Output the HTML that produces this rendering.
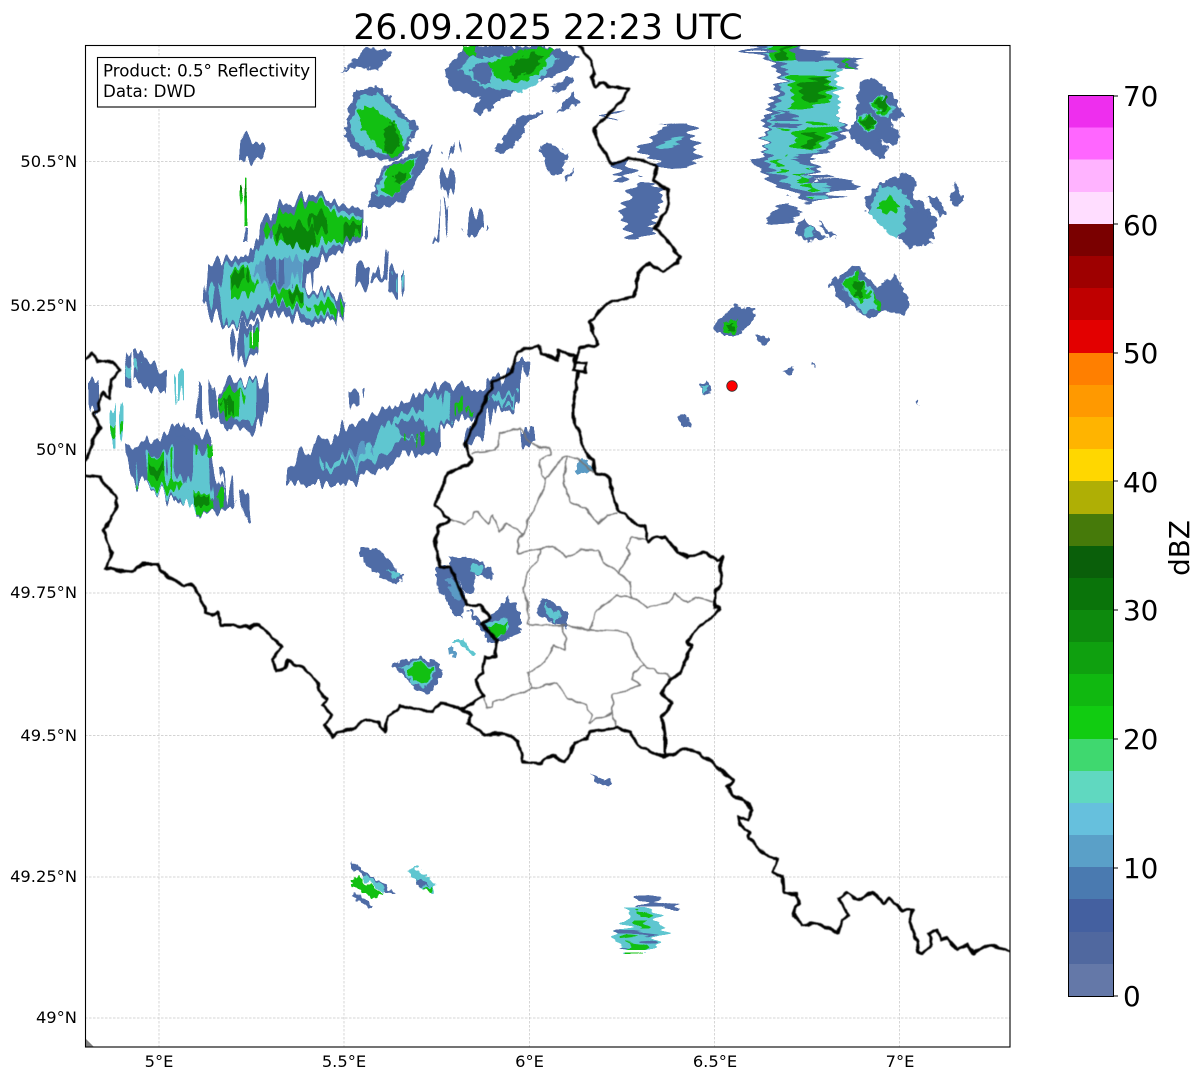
<!DOCTYPE html>
<html><head><meta charset="utf-8"><title>Radar</title>
<style>
html,body{margin:0;padding:0;background:#fff;width:1202px;height:1081px;overflow:hidden}
svg{display:block}
text{font-family:"DejaVu Sans",sans-serif;fill:#000}
.b{fill:#4f6ca6;stroke:#4f6ca6;stroke-width:1}
.t{fill:#5a9ac4;stroke:#5a9ac4;stroke-width:1}
.c{fill:#5fc6d0;stroke:#5fc6d0;stroke-width:1}
.g{fill:#12c012;stroke:#12c012;stroke-width:1}
.d{fill:#0a860a;stroke:#0a860a;stroke-width:1}
.ln{fill:none;stroke:#000;stroke-width:3;stroke-linejoin:round;stroke-linecap:round}
.gr{fill:none;stroke:#777;stroke-width:1.500;stroke-linejoin:round}
.grid{stroke:#c6c6c6;stroke-width:.7;stroke-dasharray:2.5 1.5}
</style></head><body>
<svg width="1202" height="1081" viewBox="0 0 1202 1081" xmlns="http://www.w3.org/2000/svg">
<defs>
<filter id="j" x="0" y="0" width="1202" height="1081" filterUnits="userSpaceOnUse" color-interpolation-filters="sRGB">
<feTurbulence type="fractalNoise" baseFrequency="0.16" numOctaves="2" seed="4"/>
<feDisplacementMap in="SourceGraphic" scale="9" xChannelSelector="R" yChannelSelector="G"/>
<feGaussianBlur stdDeviation=".35"/>
</filter>
<filter id="v" x="0" y="0" width="1202" height="1081" filterUnits="userSpaceOnUse" color-interpolation-filters="sRGB">
<feTurbulence type="fractalNoise" baseFrequency="0.2 0.012" numOctaves="1" seed="7"/>
<feDisplacementMap in="SourceGraphic" scale="30" xChannelSelector="R" yChannelSelector="G"/>
<feGaussianBlur stdDeviation=".35"/>
</filter>
<filter id="h" x="0" y="0" width="1202" height="1081" filterUnits="userSpaceOnUse" color-interpolation-filters="sRGB">
<feTurbulence type="fractalNoise" baseFrequency="0.012 0.22" numOctaves="1" seed="11"/>
<feDisplacementMap in="SourceGraphic" scale="28" xChannelSelector="R" yChannelSelector="G"/>
<feGaussianBlur stdDeviation=".35"/>
</filter>
<filter id="w" x="0" y="0" width="1202" height="1081" filterUnits="userSpaceOnUse" color-interpolation-filters="sRGB">
<feTurbulence type="fractalNoise" baseFrequency="0.14" numOctaves="1" seed="2"/>
<feDisplacementMap in="SourceGraphic" scale="5" xChannelSelector="R" yChannelSelector="G"/>
<feGaussianBlur stdDeviation=".45"/>
</filter>
<clipPath id="ax"><rect x="85" y="45" width="925" height="1002"/></clipPath>
</defs>
<rect width="1202" height="1081" fill="#fff"/>
<text x="548" y="39" font-size="34.7" text-anchor="middle">26.09.2025 22:23 UTC</text>

<g class="grid">
<line x1="159" y1="45" x2="159" y2="1047"/><line x1="344" y1="45" x2="344" y2="1047"/><line x1="529.500" y1="45" x2="529.500" y2="1047"/><line x1="714.500" y1="45" x2="714.500" y2="1047"/><line x1="899.500" y1="45" x2="899.500" y2="1047"/>
<line x1="85" y1="161.500" x2="1010" y2="161.500"/><line x1="85" y1="305.500" x2="1010" y2="305.500"/><line x1="85" y1="450" x2="1010" y2="450"/><line x1="85" y1="593" x2="1010" y2="593"/><line x1="85" y1="735.500" x2="1010" y2="735.500"/><line x1="85" y1="877" x2="1010" y2="877"/><line x1="85" y1="1018" x2="1010" y2="1018"/>
</g>

<g clip-path="url(#ax)">
<!-- diagonal-ish echoes -->
<g filter="url(#j)">
<polygon class="b" points="340,73 368,48 380,50 392,53 378,70 362,67 348,68"/>
<polygon class="b" points="348,110 355,90 378,87 402,113 418,127 405,153 395,160 362,157 345,137"/>
<polygon class="c" points="352,120 360,98 378,94 400,118 412,130 402,150 392,156 365,148 352,135"/>
<polygon class="g" points="358,110 372,107 398,127 405,150 392,158 362,130"/>
<polygon class="d" points="383,130 393,123 400,147 388,155"/>
<polygon class="b" points="368,207 383,167 432,147 425,167 405,200 385,207"/>
<polygon class="c" points="375,195 386,170 418,157 410,178 392,198"/>
<polygon class="g" points="382,190 388,168 415,160 408,180 392,197"/>
<polygon class="d" points="392,178 400,170 407,172 400,184"/>
<polygon class="b" points="445,70 467,47 550,47 577,57 567,70 540,80 507,95 480,115 473,110 483,97 453,90"/>
<polygon class="c" points="460,70 470,57 557,57 537,83 520,92 483,87"/>
<polygon class="b" points="470,68 490,62 490,82 478,82"/>
<polygon class="g" points="488,65 523,50 553,48 540,73 518,83 497,78"/>
<polygon class="d" points="510,67 533,52 543,57 530,73 513,77"/>
<polygon class="g" points="465,47 475,47 475,55 467,55"/>
<polygon class="b" points="552,88 572,77 573,82 555,93"/>
<polygon class="b" points="558,112 572,92 580,103 567,108"/>
<polygon class="b" points="495,150 518,118 543,112 527,123 522,137 505,152"/>
<polygon class="b" points="540,148 552,143 568,155 560,173 552,175 547,165"/>
<polygon class="b" points="565,180 573,168 572,177"/>
<polygon class="b" points="360,548 378,548 402,577 397,583 383,578 362,560"/>
<polygon class="c" points="388,570 400,573 395,580"/>
<polygon class="b" points="435,567 450,567 465,597 463,617 457,617 438,587"/>
<polygon class="t" points="445,580 452,576 462,595 457,600"/>
<polygon class="b" points="450,558 475,557 493,573 492,580 475,573 472,593 465,593 452,570"/>
<polygon class="c" points="474,565 485,568 480,574 472,571"/>
<polygon class="b" points="468,610 485,623 502,607 508,597 520,613 520,633 502,640 490,643 472,617"/>
<polygon class="c" points="486,624 505,618 510,628 495,640"/>
<polygon class="g" points="488,627 508,623 505,633 495,637"/>
<polygon class="t" points="447,647 452,645 457,657 452,657"/>
<polygon class="c" points="455,640 462,640 475,655 472,655"/>
<polygon class="b" points="393,665 415,657 438,663 442,677 428,693 418,690"/>
<polygon class="c" points="400,667 418,660 435,670 427,687 412,683"/>
<polygon class="g" points="408,670 418,662 432,670 425,683 413,680"/>
<polygon class="b" points="537,613 543,598 567,612 567,627 558,625 545,618"/>
<polygon class="c" points="545,605 560,615 555,622 545,612"/>
<polygon class="t" points="575,467 583,458 595,472 585,473 578,472"/>
<polygon class="b" points="592,775 612,782 610,787 597,782"/>
<polygon class="b" points="352,863 395,893 392,895 352,867"/>
<polygon class="c" points="366,875 384,888 382,891 364,879"/>
<polygon class="g" points="350,883 357,877 382,893 377,898 363,893"/>
<polygon class="b" points="353,897 357,893 373,905 370,908"/>
<polygon class="c" points="408,872 415,867 435,885 432,893 422,888"/>
<polygon class="b" points="416,880 424,882 427,886 418,885"/>
<polygon class="g" points="423,888 432,888 430,893"/>
<polygon class="b" points="714,325 735,305 755,310 750,325 735,335 722,335"/>
<polygon class="g" points="723,322 737,320 735,333 725,333"/>
<polygon class="d" points="727,324 733,324 732,331 728,331"/>
<polygon class="b" points="757,335 768,338 765,345 758,342"/>
<polygon class="b" points="783,372 793,367 790,375"/>
<polygon class="b" points="812,363 815,367 812,365"/>
<polygon class="b" points="917,400 919,404 917,403"/>
<polygon class="b" points="700,384 708,382 710,392 704,396"/>
<polygon class="c" points="702,386 707,385 707,391 703,392"/>
<polygon class="b" points="678,417 684,414 690,424 685,430"/>
<polygon class="b" points="830,283 855,265 877,287 895,275 910,303 903,315 883,310 867,318 852,307 837,297"/>
<polygon class="c" points="842,283 855,272 873,293 880,307 863,312 850,297"/>
<polygon class="g" points="843,283 857,273 870,297 860,302"/>
<polygon class="g" points="873,293 882,308 878,309"/>
<polygon class="d" points="853,282 862,283 862,297 857,297"/>
<polygon class="b" points="867,197 883,182 907,173 917,182 912,195 938,220 930,243 910,248 900,238 880,223 867,210"/>
<polygon class="c" points="868,210 880,187 897,187 913,207 910,227 897,237 880,227"/>
<polygon class="b" points="905,205 935,222 925,240 905,240"/>
<polygon class="g" points="877,207 890,197 900,207 887,215"/>
<polygon class="b" points="927,197 937,197 945,213 940,215"/>
<polygon class="b" points="950,203 955,183 963,200 957,207"/>
<polygon class="b" points="795,230 803,220 815,230 825,237 808,243"/>
<polygon class="c" points="804,228 811,227 813,236 806,238"/>
<polygon class="b" points="818,222 835,237 830,237 820,225"/>
<polygon class="b" points="860,83 873,78 893,95 902,117 890,120 900,137 893,145 878,140 887,150 882,158 857,143 847,130 857,120 858,97"/>
<polygon class="c" points="870,103 880,95 895,108 887,117 873,110"/>
<polygon class="c" points="857,123 867,112 878,123 868,133"/>
<polygon class="g" points="872,103 880,97 892,108 886,114 875,110"/>
<polygon class="g" points="859,123 867,114 876,123 868,131"/>
<polygon class="d" points="875,103 885,98 888,107 882,112"/>
<polygon class="d" points="862,123 870,115 875,123 868,128"/>
</g>

<!-- western echoes: vertical streaks -->
<g filter="url(#v)">
<polygon class="b" points="258,240 265,217 295,200 325,193 365,210 365,237 345,247 328,257 312,270 310,287 342,300 338,320 312,323 278,313 225,327 205,307 208,267 222,257 245,258"/>
<polygon class="c" points="270,232 290,212 325,198 358,215 355,235 325,250 305,260 300,285 335,303 330,318 310,315 275,300 225,325 213,290 225,262 250,265"/>
<polygon class="t" points="262,262 290,255 302,262 296,284 270,292 252,276"/>
<polygon class="b" points="265,262 280,257 282,282 268,285"/>
<polygon class="g" points="265,228 300,205 328,200 345,215 362,218 358,235 345,240 325,240 308,250 285,243 272,240"/>
<polygon class="d" points="275,232 300,225 320,240 310,250 285,243"/>
<polygon class="d" points="345,222 358,222 355,238 345,238"/>
<polygon class="d" points="305,218 325,212 325,230 310,232"/>
<polygon class="g" points="228,270 245,267 255,290 245,297 232,293"/>
<polygon class="d" points="232,272 245,270 247,282 235,284"/>
<polygon class="g" points="272,287 302,290 305,303 292,307 275,297"/>
<polygon class="d" points="293,291 304,291 304,300 295,300"/>
<polygon class="g" points="312,303 338,305 335,317 318,312"/>
<polygon class="b" points="238,160 245,137 265,143 258,157 248,163"/>
<polygon class="g" points="245,177 250,180 248,200 247,222 240,222 238,193"/>
<polygon class="d" points="240,186 246,182 246,194 240,193"/>
<polygon class="b" points="243,225 248,225 245,240 241,240"/>
<polygon class="b" points="232,340 242,323 258,325 258,357 238,362"/>
<polygon class="c" points="243,335 252,330 256,350 246,354"/>
<polygon class="g" points="250,333 258,333 258,350 250,352"/>
<polygon class="b" points="352,287 358,263 372,267 370,283 362,288"/>
<polygon class="b" points="375,280 387,250 380,280"/>
<polygon class="b" points="382,290 387,267 400,270 400,292"/>
<polygon class="c" points="393,275 399,272 398,285 393,283"/>
<polygon class="b" points="432,242 447,203 440,240"/>
<polygon class="b" points="440,177 452,170 457,183 447,195"/>
<polygon class="b" points="463,230 472,207 487,217 487,230 472,237"/>
<polygon class="b" points="445,155 457,142 458,147 447,157"/>
<polygon class="b" points="127,382 128,352 137,352 165,373 165,392 153,392 140,382"/>
<polygon class="c" points="128,363 137,363 137,372 128,372"/>
<polygon class="c" points="178,373 183,373 183,402 180,402"/>
<polygon class="b" points="198,383 202,383 202,418 198,418"/>
<polygon class="b" points="209,382 213,383 215,418 211,418"/>
<polygon class="b" points="217,418 217,400 232,383 262,382 267,403 255,432 232,425 225,427"/>
<polygon class="c" points="240,385 255,385 255,420 235,420"/>
<polygon class="g" points="218,400 232,392 245,392 237,417 228,417 218,408"/>
<polygon class="d" points="222,402 233,400 233,413 228,415"/>
<polygon class="b" points="88,383 97,383 98,410 92,413 88,403"/>
<polygon class="c" points="110,415 118,405 120,415 118,447 112,447 109,435"/>
<polygon class="g" points="109,427 118,427 118,437 110,437"/>
<polygon class="b" points="129,447 143,445 182,423 210,438 213,473 232,507 223,510 212,513 198,515 192,505 173,500 165,493 143,485 135,477 130,463"/>
<polygon class="c" points="142,457 168,450 205,450 213,500 198,513 178,497 143,483"/>
<polygon class="b" points="175,433 198,440 195,473 185,487 173,467"/>
<polygon class="g" points="143,483 148,455 167,453 168,480 180,483 178,490 165,490 152,483"/>
<polygon class="d" points="148,465 165,463 165,473 150,473"/>
<polygon class="g" points="192,493 210,493 213,512 198,513"/>
<polygon class="d" points="192,497 208,495 208,505 193,505"/>
<polygon class="g" points="202,447 213,447 213,457 203,457"/>
<polygon class="g" points="218,492 222,492 222,508 220,510"/>
<polygon class="b" points="220,472 225,473 235,505 230,507"/>
<polygon class="b" points="237,488 248,497 253,518 248,520 242,503"/>
<polygon class="b" points="348,392 360,390 360,402 352,408 348,400"/>
<polygon class="b" points="289,483 289,470 300,453 322,440 342,430 375,415 392,407 425,395 442,385 492,390 493,380 512,360 527,360 518,383 520,397 513,412 495,407 488,427 482,437 467,448 465,443 475,417 458,420 442,427 442,450 418,453 402,457 398,463 372,470 352,483 325,483"/>
<polygon class="c" points="325,462 350,455 370,450 380,430 392,418 410,412 438,410 438,424 415,438 390,448 366,462 356,468 345,460 325,468"/>
<polygon class="b" points="395,425 420,418 425,432 402,442"/>
<polygon class="t" points="345,455 368,442 372,452 352,462"/>
<polygon class="c" points="425,400 445,395 450,420 435,425 425,415"/>
<polygon class="c" points="492,397 515,390 512,407 495,403"/>
<polygon class="b" points="498,402 508,396 508,402 500,406"/>
<polygon class="g" points="455,403 459,403 458,417 456,415"/>
<polygon class="g" points="405,437 408,437 408,445 405,445"/>
<polygon class="g" points="418,430 421,430 420,443 418,443"/>
<polygon class="g" points="467,408 472,410 470,415"/>
<polygon class="b" points="523,428 530,428 533,445 526,443"/>
</g>

<!-- northern/southern echoes: horizontal streaks -->
<g filter="url(#h)">
<polygon class="b" points="607,120 627,113 610,122"/>
<polygon class="b" points="642,150 663,127 690,125 695,153 687,163 667,170 647,155"/>
<polygon class="c" points="660,144 682,138 684,141 662,147"/>
<polygon class="b" points="617,167 632,162 632,173 625,182 617,178"/>
<polygon class="b" points="623,203 643,180 663,190 653,227 643,238 630,238 627,227"/>
<polygon class="b" points="738,47 793,47 827,55 857,60 853,68 833,68 837,100 840,120 847,133 833,147 810,158 820,168 810,180 833,177 853,183 857,188 833,193 813,202 795,195 773,183 753,163 765,153 765,123 772,100 783,80 767,57"/>
<polygon class="c" points="762,50 793,50 800,63 837,63 838,97 840,130 827,147 790,157 813,167 803,180 830,183 827,195 810,197 787,180 767,172 773,163 767,153 768,127 773,120 783,90 787,70"/>
<polygon class="b" points="800,58 822,60 822,64 800,64"/>
<polygon class="b" points="780,112 800,118 800,122 775,122"/>
<polygon class="g" points="768,50 793,47 797,57 773,60"/>
<polygon class="g" points="790,73 830,73 830,97 807,112 793,110"/>
<polygon class="g" points="793,133 810,123 837,128 827,140 810,150 795,143"/>
<polygon class="g" points="775,168 783,158 783,168 777,170"/>
<polygon class="g" points="777,125 787,127 785,132 778,130"/>
<polygon class="g" points="795,177 808,172 803,182"/>
<polygon class="g" points="803,190 813,182 817,190 808,195"/>
<polygon class="g" points="843,60 852,65 848,67"/>
<polygon class="d" points="798,83 830,77 823,93 807,102 802,97"/>
<polygon class="d" points="805,135 820,133 818,143 810,148"/>
<polygon class="d" points="775,53 788,48 787,57 777,58"/>
<polygon class="b" points="768,217 793,200 798,217 773,223"/>
<polygon class="b" points="642,903 652,899 678,905 677,908 642,908"/>
<polygon class="c" points="630,912 650,910 657,918 665,930 653,943 645,952 623,952 615,947 617,932 630,920"/>
<polygon class="b" points="617,932 655,937 653,939 617,937"/>
<polygon class="g" points="638,915 648,915 647,928 638,927"/>
<polygon class="g" points="625,940 643,942 643,952 624,952"/>
<polygon class="b" points="615,945 622,946 621,949 615,948"/>
</g>

<g filter="url(#w)">
<!-- grey internal borders -->
<g class="gr">
<polyline points="472,453 485,452 495,450 500,438 499,434 513,429 520,428 530,443 542,448 550,448 550,455 540,460 540,468 545,480 545,487 537,503 527,522 525,533 519,537 518,553 540,549 552,547 558,550 567,558 580,550 598,550 603,563 617,570 618,573 630,582 632,597 648,607 670,602 675,593 687,603 697,597 713,602"/>
<polyline points="452,520 465,524 477,511 487,523 493,515 499,531 507,523 523,534"/>
<polyline points="545,480 563,457 567,457 563,483 570,502 585,508 598,523 607,515 618,513"/>
<polyline points="567,457 577,458 593,472"/>
<polyline points="618,573 630,553 627,548 632,538 647,539"/>
<polyline points="540,549 538,560 527,573 523,587 528,603 528,623 543,625 562,625 590,630 627,632 637,657 645,665 657,672 668,675 672,680"/>
<polyline points="590,630 597,610 617,595 632,597"/>
<polyline points="562,625 565,637 565,650 553,646 545,662 528,673 532,688 530,690 520,693 493,702 492,707 487,707 483,697"/>
<polyline points="530,689 557,683 567,698 587,705 592,715 588,723 612,713 617,728"/>
<polyline points="612,713 613,695 633,688 640,685 633,680 633,673 645,665"/>
</g>
<!-- black borders -->
<g class="ln">
<polyline points="85,475 100,477 107,487 117,498 116,507 110,520 104,530 107,540 112,552 106,569 111,568 125,572 135,570 142,564 157,564 165,575 184,586 192,584 205,607 205,612 212,616 218,612 221,625 235,625 250,628 258,624 282,647 273,660 276,671 285,668 287,661 303,668 318,683 322,697 327,699 323,705 332,715 325,725 333,737 338,732 355,728 365,719 378,722 385,732 388,717 400,706 418,710 433,711 440,702 458,708 463,711 472,715 468,723 485,735 495,734 510,735 518,742 522,755 523,762 542,763 552,755 565,762 575,743 587,738 590,732 618,728 630,732 638,745 653,753 665,757 687,748 700,754 713,763 733,780 727,787 733,797 745,800 752,810 748,820 738,817 740,825 749,832 748,837 757,847 773,859 777,859 773,873 783,877 784,893 797,894 799,903 793,913 802,925 818,923 838,933 842,920 848,915 843,905 838,898 847,893 858,900 873,892 883,903 890,899 902,910 912,910 910,923 917,942 918,953 923,953 932,944 929,933 938,930 940,940 947,938 958,950 967,944 973,953 988,945 1003,949 1012,952"/>
<polyline points="462,710 483,695 475,680 482,673 485,657 495,657 497,640 482,625 490,617 480,605 467,605 450,567 440,567 435,543 438,528 450,520 435,505 448,473 472,462 465,443 480,412 493,383 512,372 517,352 538,345 542,353 557,360 558,350 575,357 573,370 585,372 587,363 575,362 580,348 598,345 590,322 607,303 632,297 637,288 637,273 650,263 663,272 678,263 680,257 667,240 655,228 667,210 668,190 653,180 657,167 643,160 628,158 613,164 598,143 594,128 613,110 623,100 628,88 615,88 600,83 595,88 592,78 595,73 590,60 578,44"/>
<polyline points="578,373 573,407 573,418 580,433 585,453 593,460 595,473 610,477 612,493 617,508 633,522 645,527 648,542 657,537 665,537 678,552 688,557 703,552 718,560 723,557 720,567 722,583 715,593 715,607 720,608 715,615 698,627 687,642 692,645 680,673 670,680 662,693 672,703 662,717 665,737 665,757"/>
<polyline points="83,363 93,353 98,361 113,362 120,370 112,380 110,398 102,392 98,410 93,413 100,427 93,440 87,458 83,462"/>
</g>
</g>
<polygon points="85,1038 94,1047 85,1047" fill="#808080"/>
<circle cx="732" cy="386" r="5.300" fill="#f00" stroke="#333" stroke-width=".8"/>
</g>

<rect x="85.500" y="45.500" width="924.500" height="1001.500" fill="none" stroke="#000" stroke-width="1.1"/>

<rect x="97.500" y="57.500" width="218" height="49.500" fill="#fff" stroke="#000" stroke-width="1.1"/>
<text x="103" y="76.500" font-size="16.650">Product: 0.5° Reflectivity</text>
<text x="103" y="97" font-size="16.650">Data: DWD</text>

<g font-size="16.300" text-anchor="end">
<text x="77" y="167">50.5°N</text><text x="77" y="311">50.25°N</text><text x="77" y="455">50°N</text><text x="77" y="598">49.75°N</text><text x="77" y="741">49.5°N</text><text x="77" y="882">49.25°N</text><text x="77" y="1023">49°N</text>
</g>
<g font-size="16.300" text-anchor="middle">
<text x="159" y="1067">5°E</text><text x="344" y="1067">5.5°E</text><text x="529.500" y="1067">6°E</text><text x="715" y="1067">6.5°E</text><text x="900" y="1067">7°E</text>
</g>

<!-- colorbar -->
<g shape-rendering="crispEdges">
<rect x="1068" y="95.500" width="45" height="32.500" fill="#ee2eee"/>
<rect x="1068" y="127.500" width="45" height="32.500" fill="#ff66ff"/>
<rect x="1068" y="159.500" width="45" height="33" fill="#ffb3ff"/>
<rect x="1068" y="192" width="45" height="32.500" fill="#ffddff"/>
<rect x="1068" y="224" width="45" height="32.500" fill="#7a0000"/>
<rect x="1068" y="256" width="45" height="32.500" fill="#9e0000"/>
<rect x="1068" y="288" width="45" height="32.500" fill="#bf0000"/>
<rect x="1068" y="320" width="45" height="33" fill="#e30000"/>
<rect x="1068" y="353" width="45" height="32.500" fill="#ff7f00"/>
<rect x="1068" y="385" width="45" height="32.500" fill="#ff9900"/>
<rect x="1068" y="417" width="45" height="32.500" fill="#ffb400"/>
<rect x="1068" y="449" width="45" height="32.500" fill="#ffd700"/>
<rect x="1068" y="481" width="45" height="33" fill="#afaf05"/>
<rect x="1068" y="514" width="45" height="33" fill="#467a0a"/>
<rect x="1068" y="546" width="45" height="33" fill="#0a5f0a"/>
<rect x="1068" y="578" width="45" height="33" fill="#0a740a"/>
<rect x="1068" y="610" width="45" height="33" fill="#0d8a0d"/>
<rect x="1068" y="642" width="45" height="33" fill="#0fa00f"/>
<rect x="1068" y="674" width="45" height="33" fill="#10b810"/>
<rect x="1068" y="706" width="45" height="33" fill="#11cc11"/>
<rect x="1068" y="739" width="45" height="32" fill="#3fd86f"/>
<rect x="1068" y="771" width="45" height="32" fill="#60d8c0"/>
<rect x="1068" y="803" width="45" height="32.500" fill="#66c0dd"/>
<rect x="1068" y="835" width="45" height="33" fill="#5aa0c8"/>
<rect x="1068" y="867" width="45" height="33" fill="#4a7ab0"/>
<rect x="1068" y="899" width="45" height="33" fill="#4460a0"/>
<rect x="1068" y="932" width="45" height="32" fill="#50689f"/>
<rect x="1068" y="964" width="45" height="32.500" fill="#6478a8"/>
</g>
<rect x="1068.500" y="95.500" width="45" height="901" fill="none" stroke="#000" stroke-width="1"/>
<g stroke="#000" stroke-width="1"><line x1="1113" y1="96" x2="1118" y2="96"/><line x1="1113" y1="224" x2="1118" y2="224"/><line x1="1113" y1="353" x2="1118" y2="353"/><line x1="1113" y1="481" x2="1118" y2="481"/><line x1="1113" y1="610" x2="1118" y2="610"/><line x1="1113" y1="739" x2="1118" y2="739"/><line x1="1113" y1="868" x2="1118" y2="868"/><line x1="1113" y1="996" x2="1118" y2="996"/></g>
<g font-size="27.800">
<text x="1123" y="106">70</text><text x="1123" y="235">60</text><text x="1123" y="363">50</text><text x="1123" y="492">40</text><text x="1123" y="620">30</text><text x="1123" y="749">20</text><text x="1123" y="878">10</text><text x="1123" y="1006">0</text>
</g>
<text transform="translate(1189,548) rotate(-90)" font-size="27.800" text-anchor="middle">dBZ</text>
</svg>
</body></html>
